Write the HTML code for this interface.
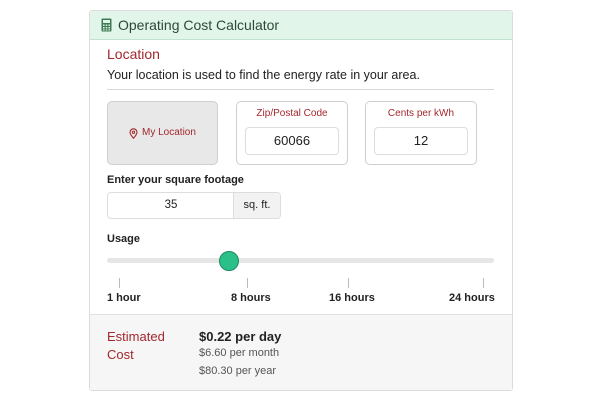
<!DOCTYPE html>
<html><head><style>
*{margin:0;padding:0;box-sizing:border-box}
body{width:600px;height:400px;background:#fff;font-family:"Liberation Sans",sans-serif;position:relative;overflow:hidden;color:#222}
.a{position:absolute}
.card{left:89px;top:10px;width:424px;height:381px;border:1px solid #dcdcdc;border-radius:3px}
.hdr{left:90px;top:11px;width:422px;height:29px;background:#e2f5ea;border-bottom:1px solid #bfe3cf}
.red{color:#a3282d}
.box{border:1px solid #cfcfcf;border-radius:5px;background:#fff}
.inp{border:1px solid #ddd;border-radius:4px;background:#fff;text-align:center;font-size:13px;line-height:26px}
.lbl{font-size:10px;text-align:center}
.b{font-weight:bold}
.tick{width:1px;height:10px;background:#bbb;top:278px}
.tl{top:292px;font-size:11px;font-weight:bold}
</style></head><body>
<div class="a card"></div>
<div class="a hdr"></div>
<svg class="a" style="left:101px;top:18px" width="11" height="14" viewBox="0 0 11 14"><rect x="0.5" y="0.5" width="10" height="13" rx="1" fill="#3d7a52"/><rect x="2" y="2" width="7" height="3" fill="#e2f5ea"/><g fill="#e2f5ea"><rect x="2" y="6.5" width="1.6" height="1.4"/><rect x="4.7" y="6.5" width="1.6" height="1.4"/><rect x="7.4" y="6.5" width="1.6" height="1.4"/><rect x="2" y="9" width="1.6" height="1.4"/><rect x="4.7" y="9" width="1.6" height="1.4"/><rect x="7.4" y="9" width="1.6" height="1.4"/><rect x="2" y="11.3" width="1.6" height="1.2"/><rect x="4.7" y="11.3" width="1.6" height="1.2"/><rect x="7.4" y="11.3" width="1.6" height="1.2"/></g></svg>
<div class="a" style="left:118px;top:17px;font-size:14px;color:#2b4a36">Operating Cost Calculator</div>
<div class="a red" style="left:107px;top:46px;font-size:14px">Location</div>
<div class="a" style="left:107px;top:68px;font-size:12.5px">Your location is used to find the energy rate in your area.</div>
<div class="a" style="left:107px;top:89px;width:387px;height:1px;background:#d8d8d8"></div>
<div class="a" style="left:107px;top:101px;width:111px;height:64px;background:#e8e8e8;border:1px solid #cfcfcf;border-radius:5px"></div>
<svg class="a" style="left:129px;top:128px" width="9" height="11" viewBox="0 0 9 11"><path d="M4.5 10.2C2 7.5 1 5.8 1 4.3a3.5 3.5 0 0 1 7 0c0 1.5-1 3.2-3.5 5.9z" fill="none" stroke="#a3282d" stroke-width="1.1"/><circle cx="4.5" cy="4.3" r="1.2" fill="none" stroke="#a3282d" stroke-width="1"/></svg>
<div class="a red" style="left:142px;top:127px;font-size:10px">My Location</div>
<div class="a box" style="left:236px;top:101px;width:112px;height:64px"></div>
<div class="a lbl red" style="left:236px;top:108px;width:112px">Zip/Postal Code</div>
<div class="a inp" style="left:245px;top:127px;width:94px;height:28px">60066</div>
<div class="a box" style="left:365px;top:101px;width:112px;height:64px"></div>
<div class="a lbl red" style="left:365px;top:108px;width:112px">Cents per kWh</div>
<div class="a inp" style="left:374px;top:127px;width:94px;height:28px">12</div>
<div class="a b" style="left:107px;top:174px;font-size:11px">Enter your square footage</div>
<div class="a inp" style="left:107px;top:192px;width:174px;height:27px;text-align:left"></div>
<div class="a" style="left:108px;top:192px;width:126px;height:27px;text-align:center;font-size:11.5px;line-height:26px">35</div>
<div class="a" style="left:233px;top:193px;width:47px;height:25px;background:#f2f2f2;border-left:1px solid #ddd;border-radius:0 4px 4px 0;text-align:center;font-size:11px;line-height:25px">sq. ft.</div>
<div class="a b" style="left:107px;top:233px;font-size:11px">Usage</div>
<div class="a" style="left:107px;top:258px;width:387px;height:5px;background:#e6e6e6;border-radius:3px"></div>
<div class="a" style="left:219px;top:251px;width:20px;height:20px;border-radius:50%;background:#2bbf8a;border:1.5px solid #1a8a62"></div>
<div class="a tick" style="left:119px"></div>
<div class="a tick" style="left:247px"></div>
<div class="a tick" style="left:348px"></div>
<div class="a tick" style="left:483px"></div>
<div class="a tl" style="left:107px">1 hour</div>
<div class="a tl" style="left:231px">8 hours</div>
<div class="a tl" style="left:329px">16 hours</div>
<div class="a tl" style="left:449px">24 hours</div>
<div class="a" style="left:90px;top:314px;width:422px;height:76px;background:#f6f6f6;border-top:1px solid #e2e2e2"></div>
<div class="a red" style="left:107px;top:328px;font-size:13px;line-height:18px">Estimated<br>Cost</div>
<div class="a b" style="left:199px;top:329px;font-size:13px">$0.22 per day</div>
<div class="a" style="left:199px;top:347px;font-size:11px;color:#555">$6.60 per month</div>
<div class="a" style="left:199px;top:365px;font-size:11px;color:#555">$80.30 per year</div>
</body></html>
